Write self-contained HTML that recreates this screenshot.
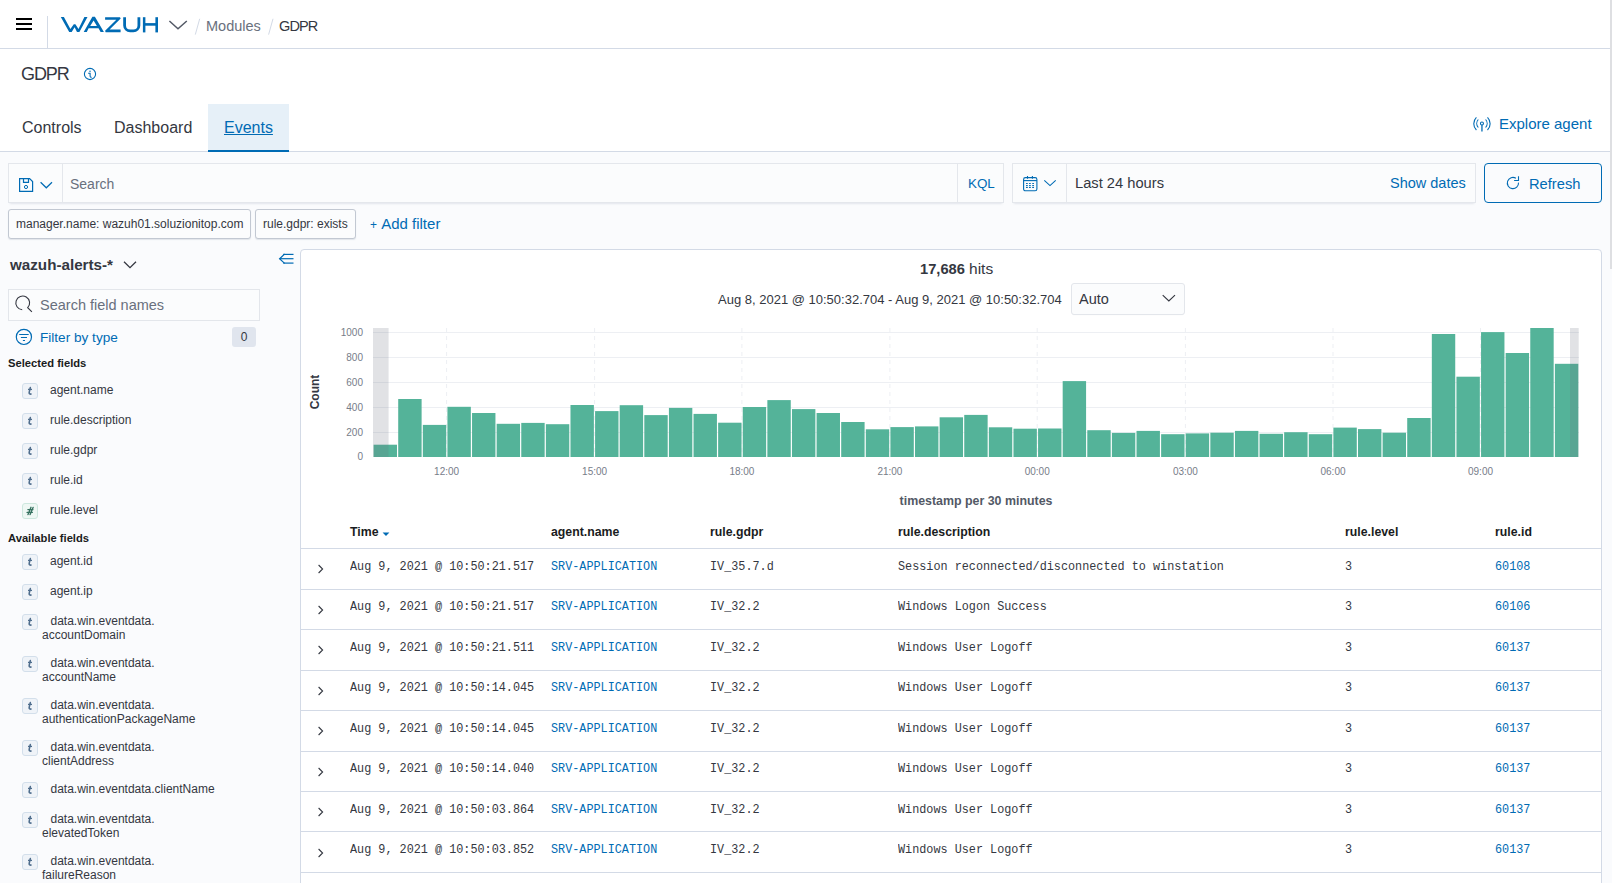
<!DOCTYPE html>
<html><head><meta charset="utf-8">
<style>
*{box-sizing:border-box;margin:0;padding:0}
html,body{width:1612px;height:883px;overflow:hidden}
body{font-family:"Liberation Sans",sans-serif;color:#343741;background:#FAFBFD;position:relative}
.a{position:absolute;white-space:nowrap}
.hdr{position:absolute;left:0;top:0;width:1610px;height:49px;background:#fff;border-bottom:1px solid #D3DAE6}
.sub{position:absolute;left:0;top:49px;width:1610px;height:103px;background:#fff;border-bottom:1px solid #D3DAE6}
.scroll{position:absolute;left:1610px;top:0;width:2px;height:269px;background:#DEDFE2}
.box{position:absolute;background:#FBFCFD;border:1px solid #E4E7EC;box-shadow:0 1px 1px -1px rgba(152,162,179,.2),0 3px 2px -2px rgba(152,162,179,.2)}
.pill{position:absolute;background:#FBFCFD;border:1px solid #C2C8D2;border-radius:3px;font-size:12px;line-height:28px;padding-left:7px;box-shadow:0 1px 1px rgba(152,162,179,.25)}
.blue{color:#006BB4}
.fi{width:16px;height:16px;border:1px solid #D3DFEB;background:#EFF3F8;border-radius:3px;text-align:center;font-family:"Liberation Serif",serif;font-style:italic;font-weight:700;font-size:12px;line-height:14px;color:#52708F}
.fg{border-color:#CDE7DE;background:#EEF7F4;color:#367260;font-family:"Liberation Sans",sans-serif;font-size:10px}
.th{font-size:12.3px;line-height:14px;font-weight:700;color:#1A1C21}
.td{font-family:"Liberation Mono",monospace;font-size:13.2px;line-height:14px;color:#343741;transform:scaleX(0.895);transform-origin:0 0}
.td.blue{color:#006BB4}
.fl{font-size:12px;line-height:14px;color:#343741}
</style></head><body>
<!-- header -->
<div class="hdr"></div>
<svg class="a" style="left:0;top:0" width="320" height="49" viewBox="0 0 320 49">
 <rect x="16" y="18" width="16" height="2" fill="#000"/>
 <rect x="16" y="23" width="16" height="2" fill="#000"/>
 <rect x="16" y="28" width="16" height="2" fill="#000"/>
 <rect x="47" y="16" width="1" height="33" fill="#D3DAE6"/>
 <g fill="#006BB4">
  <polygon points="60.8,16.9 63.9,16.9 70.4,28.9 73.8,24.2 75.4,24.2 78.5,28.9 84.4,16.9 87.5,16.9 79.4,32.1 77,32.1 74.6,27.3 71.7,32.1 69.2,32.1"/>
  <path fill-rule="evenodd" d="M83.7,32.1 L92.4,16.8 L94.9,16.8 L103.9,32.1 L100.6,32.1 L98.5,28.3 L88.6,28.3 L86.8,32.1 Z M90.2,25.9 L93.6,20.6 L96.9,25.9 Z"/>
  <polygon points="105.1,17.2 120,17.2 120.7,18.6 109.6,29.6 120.6,29.6 120.6,32.2 105.6,32.2 105.1,30.7 116.3,19.7 105.1,19.7"/>
 </g>
 <path d="M124.6 17.2 V25.4 A5.5 5.5 0 0 0 130.1 30.9 H133.4 A5.5 5.5 0 0 0 138.9 25.4 V17.2" fill="none" stroke="#006BB4" stroke-width="2.8"/>
 <g fill="#006BB4">
  <rect x="142.9" y="17.2" width="2.5" height="15.2"/>
  <rect x="155.4" y="17.2" width="2.6" height="15.2"/>
  <rect x="144" y="23.1" width="12" height="2.6"/>
 </g>
 <path d="M169.4 21 L178 28.7 L186.8 21" fill="none" stroke="#535966" stroke-width="1.5"/>
 <path d="M199.7 18.8 L195.3 34.6" stroke="#D3DAE6" stroke-width="1"/>
 <path d="M273 18.8 L268.6 34.6" stroke="#D3DAE6" stroke-width="1"/>
</svg>
<div class="a" style="left:206px;top:17px;font-size:14.5px;line-height:18px;color:#69707D">Modules</div>
<div class="a" style="left:279px;top:17px;font-size:14.5px;letter-spacing:-0.9px;line-height:18px;color:#343741">GDPR</div>
<div class="sub"></div>
<!-- query bar -->
<div class="box" style="left:8px;top:163px;width:996px;height:40px"></div>
<div class="a" style="left:62px;top:164px;width:1px;height:38px;background:#E4E7EC"></div>
<div class="a" style="left:957px;top:164px;width:1px;height:38px;background:#E4E7EC"></div>
<svg class="a" style="left:17px;top:176px" width="38" height="18" viewBox="0 0 38 18">
 <g fill="none" stroke="#006BB4" stroke-width="1.2">
  <path d="M2.6 2.6 H12.6 L15.6 5.6 V15.3 H2.6 Z"/>
  <path d="M6.5 2.6 V6.3 H11.5 V2.6"/>
  <circle cx="9" cy="11" r="1.6" stroke-width="1"/>
  <path d="M23.6 6.3 L29.3 11.8 L35 6.3"/>
 </g>
</svg>
<div class="a" style="left:70px;top:176px;font-size:14px;line-height:17px;color:#69707D">Search</div>
<div class="a" style="left:968px;top:174.5px;font-size:13.4px;line-height:17px;color:#006BB4">KQL</div>
<div class="box" style="left:1012px;top:163px;width:464px;height:40px"></div>
<div class="a" style="left:1066px;top:164px;width:1px;height:38px;background:#E4E7EC"></div>
<svg class="a" style="left:1020px;top:175px" width="40" height="18" viewBox="0 0 40 18">
 <g fill="none" stroke="#006BB4" stroke-width="1.1">
  <rect x="3.6" y="2.6" width="13.3" height="13.2" rx="1.8"/>
  <path d="M3.6 5.6 H16.9"/>
  <path d="M7.5 1 V3.8 M12.4 1 V3.8"/>
  <path d="M24.3 5.3 L30 10.6 L35.7 5.3"/>
 </g>
 <g fill="#006BB4"><rect x="5.95" y="7.95" width="1.9" height="1.1" rx="0.5"/><rect x="8.95" y="7.95" width="1.9" height="1.1" rx="0.5"/><rect x="12.15" y="7.95" width="1.9" height="1.1" rx="0.5"/><rect x="5.95" y="9.95" width="1.9" height="1.1" rx="0.5"/><rect x="8.95" y="9.95" width="1.9" height="1.1" rx="0.5"/><rect x="12.15" y="9.95" width="1.9" height="1.1" rx="0.5"/><rect x="5.95" y="11.85" width="1.9" height="1.1" rx="0.5"/><rect x="8.95" y="11.85" width="1.9" height="1.1" rx="0.5"/><rect x="12.15" y="11.85" width="1.9" height="1.1" rx="0.5"/></g>
</svg>
<div class="a" style="left:1075px;top:175px;font-size:14.7px;line-height:17px;color:#343741">Last 24 hours</div>
<div class="a" style="left:1390px;top:175px;font-size:14.5px;line-height:17px;color:#006BB4">Show dates</div>
<div class="a" style="left:1484px;top:163px;width:118px;height:40px;border:1px solid #006BB4;border-radius:4px;background:#FAFBFD"></div>
<svg class="a" style="left:1505px;top:175px" width="16" height="16" viewBox="0 0 16 16"><g fill="none" stroke="#006BB4" stroke-width="1.1"><path d="M10.9 3.3 A5.6 5.6 0 1 0 13.5 7.6"/><path d="M13.5 1.2 V5.5 H9.1"/></g></svg>
<div class="a" style="left:1529px;top:176px;font-size:14.7px;line-height:17px;color:#006BB4">Refresh</div>
<!-- filters -->
<div class="pill" style="left:8px;top:209px;width:243px;height:30px">manager.name: wazuh01.soluzionitop.com</div>
<div class="pill" style="left:255px;top:209px;width:101px;height:30px">rule.gdpr: exists</div>
<div class="a" style="left:370px;top:215px;font-size:15px;line-height:17px;color:#006BB4"><span style="font-size:12px;position:relative;top:-0.5px">+</span>&nbsp;Add filter</div>
<div class="a" style="left:21px;top:64px;font-size:18px;line-height:20px;letter-spacing:-1.1px;color:#343741">GDPR</div>
<svg class="a" style="left:83px;top:67px" width="14" height="14" viewBox="0 0 14 14"><circle cx="7" cy="7" r="5.6" fill="none" stroke="#006BB4" stroke-width="1.1"/><circle cx="7" cy="4.3" r="0.75" fill="#006BB4"/><path d="M5.1 6.3 H7.1 V9.2 Q7.2 10.4 8.6 10.4" fill="none" stroke="#006BB4" stroke-width="1.1"/></svg>
<div class="a" style="left:208px;top:104px;width:81px;height:48px;background:#E6F0F8;border-bottom:2px solid #006BB4"></div>
<div class="a" style="left:22px;top:118px;font-size:16px;line-height:20px;color:#343741">Controls</div>
<div class="a" style="left:114px;top:118px;font-size:16px;line-height:20px;color:#343741">Dashboard</div>
<div class="a" style="left:224px;top:118px;font-size:16px;line-height:20px;color:#006BB4;text-decoration:underline">Events</div>
<svg class="a" style="left:1472px;top:115px" width="20" height="18" viewBox="0 0 20 18">
 <g fill="none" stroke="#006BB4" stroke-width="1.1">
  <circle cx="9.95" cy="8.5" r="1.5"/>
  <path d="M9.95 10 V16.6" stroke-width="1.3"/>
  <path d="M6.3 4.5 A6 6 0 0 0 6.3 12.5"/>
  <path d="M13.6 4.5 A6 6 0 0 1 13.6 12.5"/>
  <path d="M4.4 2.3 A9 9 0 0 0 4.4 15"/>
  <path d="M15.5 2.3 A9 9 0 0 1 15.5 15"/>
 </g>
</svg>
<div class="a" style="left:1499px;top:115px;font-size:15px;line-height:18px;color:#006BB4">Explore agent</div>
<div class="scroll"></div>
<!-- sidebar -->
<div class="a" style="left:10px;top:256px;font-size:15.2px;line-height:18px;font-weight:700;color:#343741">wazuh-alerts-*</div>
<svg class="a" style="left:120px;top:256px" width="20" height="16" viewBox="0 0 20 16"><path d="M4 5.7 L10 11.6 L16 5.7" fill="none" stroke="#343741" stroke-width="1.3"/></svg>
<svg class="a" style="left:276px;top:250px" width="20" height="16" viewBox="0 0 20 16"><g fill="none" stroke="#006BB4" stroke-width="1.2"><path d="M8.6 4 L3.6 8.7 L8.6 13.4"/><path d="M3.6 8.7 H17.5"/><path d="M7.2 4.4 H17.5"/><path d="M7.2 13.1 H17.5"/></g></svg>
<div class="a" style="left:8px;top:289px;width:252px;height:32px;background:#FBFCFD;border:1px solid #E3E6EB"></div>
<svg class="a" style="left:14px;top:294px" width="20" height="20" viewBox="0 0 20 20"><path d="M17.9 17.9 L13.7 13.7 A6.9 6.9 0 1 0 8.2 15.8" fill="none" stroke="#343741" stroke-width="1.1"/></svg>
<div class="a" style="left:40px;top:297px;font-size:14.5px;line-height:17px;color:#69707D">Search field names</div>
<svg class="a" style="left:14px;top:327px" width="20" height="20" viewBox="0 0 20 20"><g fill="none" stroke="#006BB4" stroke-width="1.2"><circle cx="9.9" cy="9.9" r="7.6"/><path d="M5.2 7.5 H14.7 M6.9 10.5 H13 M8.9 13.5 H11" stroke-width="1"/></g></svg>
<div class="a" style="left:40px;top:329px;font-size:13.6px;line-height:17px;color:#006BB4">Filter by type</div>
<div class="a" style="left:232px;top:327px;width:24px;height:20px;background:#E0E5EE;border-radius:3px;font-size:12px;line-height:20px;text-align:center;color:#343741">0</div>
<div class="a" style="left:8px;top:357px;font-size:11.2px;line-height:13px;font-weight:700;color:#1A1C21">Selected fields</div>
<div class="a" style="left:8px;top:532px;font-size:11.2px;line-height:13px;font-weight:700;color:#1A1C21">Available fields</div>
<div class="a fi" style="left:22px;top:383px"><svg width="16" height="16" viewBox="0 0 16 16" style="position:absolute;left:-1px;top:-1px"><path d="M8.3 4.6 L7.2 9.4 Q6.9 11.1 9 11.1" fill="none" stroke="#4E6D8D" stroke-width="1.6" stroke-linecap="round"/><path d="M6 6.4 H10" stroke="#4E6D8D" stroke-width="1.3"/></svg></div>
<div class="a fl" style="left:50px;top:383px">agent.name</div>
<div class="a fi" style="left:22px;top:413px"><svg width="16" height="16" viewBox="0 0 16 16" style="position:absolute;left:-1px;top:-1px"><path d="M8.3 4.6 L7.2 9.4 Q6.9 11.1 9 11.1" fill="none" stroke="#4E6D8D" stroke-width="1.6" stroke-linecap="round"/><path d="M6 6.4 H10" stroke="#4E6D8D" stroke-width="1.3"/></svg></div>
<div class="a fl" style="left:50px;top:413px">rule.description</div>
<div class="a fi" style="left:22px;top:443px"><svg width="16" height="16" viewBox="0 0 16 16" style="position:absolute;left:-1px;top:-1px"><path d="M8.3 4.6 L7.2 9.4 Q6.9 11.1 9 11.1" fill="none" stroke="#4E6D8D" stroke-width="1.6" stroke-linecap="round"/><path d="M6 6.4 H10" stroke="#4E6D8D" stroke-width="1.3"/></svg></div>
<div class="a fl" style="left:50px;top:443px">rule.gdpr</div>
<div class="a fi" style="left:22px;top:473px"><svg width="16" height="16" viewBox="0 0 16 16" style="position:absolute;left:-1px;top:-1px"><path d="M8.3 4.6 L7.2 9.4 Q6.9 11.1 9 11.1" fill="none" stroke="#4E6D8D" stroke-width="1.6" stroke-linecap="round"/><path d="M6 6.4 H10" stroke="#4E6D8D" stroke-width="1.3"/></svg></div>
<div class="a fl" style="left:50px;top:473px">rule.id</div>
<div class="a fi fg" style="left:22px;top:503px"><svg width="16" height="16" viewBox="0 0 16 16" style="position:absolute;left:-1px;top:-1px"><g fill="none" stroke="#357160" stroke-width="1.35" stroke-linecap="round"><path d="M9 4.3 L6 11.6 M11.1 4.4 L8.1 11.6 M5.9 6.6 H11 M5.1 9.4 H10.3"/></g></svg></div>
<div class="a fl" style="left:50px;top:503px">rule.level</div>
<div class="a fi" style="left:22px;top:554px"><svg width="16" height="16" viewBox="0 0 16 16" style="position:absolute;left:-1px;top:-1px"><path d="M8.3 4.6 L7.2 9.4 Q6.9 11.1 9 11.1" fill="none" stroke="#4E6D8D" stroke-width="1.6" stroke-linecap="round"/><path d="M6 6.4 H10" stroke="#4E6D8D" stroke-width="1.3"/></svg></div>
<div class="a fl" style="left:50px;top:554px">agent.id</div>
<div class="a fi" style="left:22px;top:584px"><svg width="16" height="16" viewBox="0 0 16 16" style="position:absolute;left:-1px;top:-1px"><path d="M8.3 4.6 L7.2 9.4 Q6.9 11.1 9 11.1" fill="none" stroke="#4E6D8D" stroke-width="1.6" stroke-linecap="round"/><path d="M6 6.4 H10" stroke="#4E6D8D" stroke-width="1.3"/></svg></div>
<div class="a fl" style="left:50px;top:584px">agent.ip</div>
<div class="a fi" style="left:22px;top:614px"><svg width="16" height="16" viewBox="0 0 16 16" style="position:absolute;left:-1px;top:-1px"><path d="M8.3 4.6 L7.2 9.4 Q6.9 11.1 9 11.1" fill="none" stroke="#4E6D8D" stroke-width="1.6" stroke-linecap="round"/><path d="M6 6.4 H10" stroke="#4E6D8D" stroke-width="1.3"/></svg></div>
<div class="a fl" style="left:50.5px;top:614px">data.win.eventdata.</div>
<div class="a fl" style="left:42px;top:628px">accountDomain</div>
<div class="a fi" style="left:22px;top:656px"><svg width="16" height="16" viewBox="0 0 16 16" style="position:absolute;left:-1px;top:-1px"><path d="M8.3 4.6 L7.2 9.4 Q6.9 11.1 9 11.1" fill="none" stroke="#4E6D8D" stroke-width="1.6" stroke-linecap="round"/><path d="M6 6.4 H10" stroke="#4E6D8D" stroke-width="1.3"/></svg></div>
<div class="a fl" style="left:50.5px;top:656px">data.win.eventdata.</div>
<div class="a fl" style="left:42px;top:670px">accountName</div>
<div class="a fi" style="left:22px;top:698px"><svg width="16" height="16" viewBox="0 0 16 16" style="position:absolute;left:-1px;top:-1px"><path d="M8.3 4.6 L7.2 9.4 Q6.9 11.1 9 11.1" fill="none" stroke="#4E6D8D" stroke-width="1.6" stroke-linecap="round"/><path d="M6 6.4 H10" stroke="#4E6D8D" stroke-width="1.3"/></svg></div>
<div class="a fl" style="left:50.5px;top:698px">data.win.eventdata.</div>
<div class="a fl" style="left:42px;top:712px">authenticationPackageName</div>
<div class="a fi" style="left:22px;top:740px"><svg width="16" height="16" viewBox="0 0 16 16" style="position:absolute;left:-1px;top:-1px"><path d="M8.3 4.6 L7.2 9.4 Q6.9 11.1 9 11.1" fill="none" stroke="#4E6D8D" stroke-width="1.6" stroke-linecap="round"/><path d="M6 6.4 H10" stroke="#4E6D8D" stroke-width="1.3"/></svg></div>
<div class="a fl" style="left:50.5px;top:740px">data.win.eventdata.</div>
<div class="a fl" style="left:42px;top:754px">clientAddress</div>
<div class="a fi" style="left:22px;top:782px"><svg width="16" height="16" viewBox="0 0 16 16" style="position:absolute;left:-1px;top:-1px"><path d="M8.3 4.6 L7.2 9.4 Q6.9 11.1 9 11.1" fill="none" stroke="#4E6D8D" stroke-width="1.6" stroke-linecap="round"/><path d="M6 6.4 H10" stroke="#4E6D8D" stroke-width="1.3"/></svg></div>
<div class="a fl" style="left:50.5px;top:782px">data.win.eventdata.clientName</div>
<div class="a fi" style="left:22px;top:812px"><svg width="16" height="16" viewBox="0 0 16 16" style="position:absolute;left:-1px;top:-1px"><path d="M8.3 4.6 L7.2 9.4 Q6.9 11.1 9 11.1" fill="none" stroke="#4E6D8D" stroke-width="1.6" stroke-linecap="round"/><path d="M6 6.4 H10" stroke="#4E6D8D" stroke-width="1.3"/></svg></div>
<div class="a fl" style="left:50.5px;top:812px">data.win.eventdata.</div>
<div class="a fl" style="left:42px;top:826px">elevatedToken</div>
<div class="a fi" style="left:22px;top:854px"><svg width="16" height="16" viewBox="0 0 16 16" style="position:absolute;left:-1px;top:-1px"><path d="M8.3 4.6 L7.2 9.4 Q6.9 11.1 9 11.1" fill="none" stroke="#4E6D8D" stroke-width="1.6" stroke-linecap="round"/><path d="M6 6.4 H10" stroke="#4E6D8D" stroke-width="1.3"/></svg></div>
<div class="a fl" style="left:50.5px;top:854px">data.win.eventdata.</div>
<div class="a fl" style="left:42px;top:868px">failureReason</div>
<!-- panel -->
<div class="a" style="left:300px;top:249px;width:1302px;height:700px;background:#fff;border:1px solid #D3DAE6;border-radius:4px"></div>
<div class="a" style="left:920px;top:260px;font-size:14.7px;line-height:18px;color:#343741"><b>17,686</b> <span style="font-size:15.5px">hits</span></div>
<div class="a" style="left:718px;top:292px;font-size:13px;line-height:16px;color:#343741">Aug 8, 2021 @ 10:50:32.704 - Aug 9, 2021 @ 10:50:32.704</div>
<div class="a" style="left:1071px;top:283px;width:114px;height:32px;background:#FBFCFD;border:1px solid #E3E6EB;border-radius:3px;box-shadow:0 1px 1px -1px rgba(152,162,179,.2)"></div>
<div class="a" style="left:1079px;top:291px;font-size:14.5px;line-height:17px;color:#343741">Auto</div>
<svg class="a" style="left:1159px;top:290px" width="18" height="16" viewBox="0 0 18 16"><path d="M3.7 5.2 L9.85 10.9 L16 5.2" fill="none" stroke="#343741" stroke-width="1.15"/></svg>
<svg class="a" style="left:0;top:0" width="1612" height="883" viewBox="0 0 1612 883">
<line x1="373" y1="332.5" x2="1579" y2="332.5" stroke="#EDEFF3" stroke-width="1"/>
<line x1="373" y1="357.5" x2="1579" y2="357.5" stroke="#EDEFF3" stroke-width="1"/>
<line x1="373" y1="382.5" x2="1579" y2="382.5" stroke="#EDEFF3" stroke-width="1"/>
<line x1="373" y1="407.5" x2="1579" y2="407.5" stroke="#EDEFF3" stroke-width="1"/>
<line x1="373" y1="432.5" x2="1579" y2="432.5" stroke="#EDEFF3" stroke-width="1"/>
<line x1="446.6" y1="328" x2="446.6" y2="457" stroke="#EDEFF3" stroke-width="1" stroke-dasharray="4 4"/>
<line x1="594.6" y1="328" x2="594.6" y2="457" stroke="#EDEFF3" stroke-width="1" stroke-dasharray="4 4"/>
<line x1="741.9" y1="328" x2="741.9" y2="457" stroke="#EDEFF3" stroke-width="1" stroke-dasharray="4 4"/>
<line x1="889.9" y1="328" x2="889.9" y2="457" stroke="#EDEFF3" stroke-width="1" stroke-dasharray="4 4"/>
<line x1="1037.2" y1="328" x2="1037.2" y2="457" stroke="#EDEFF3" stroke-width="1" stroke-dasharray="4 4"/>
<line x1="1185.4" y1="328" x2="1185.4" y2="457" stroke="#EDEFF3" stroke-width="1" stroke-dasharray="4 4"/>
<line x1="1333" y1="328" x2="1333" y2="457" stroke="#EDEFF3" stroke-width="1" stroke-dasharray="4 4"/>
<line x1="1480.5" y1="328" x2="1480.5" y2="457" stroke="#EDEFF3" stroke-width="1" stroke-dasharray="4 4"/>
<rect x="373.60" y="444.7" width="23.4" height="12.3" fill="#54B399"/>
<rect x="398.21" y="399" width="23.4" height="58.0" fill="#54B399"/>
<rect x="422.82" y="424.9" width="23.4" height="32.1" fill="#54B399"/>
<rect x="447.43" y="406.8" width="23.4" height="50.2" fill="#54B399"/>
<rect x="472.04" y="413" width="23.4" height="44.0" fill="#54B399"/>
<rect x="496.65" y="423.8" width="23.4" height="33.2" fill="#54B399"/>
<rect x="521.26" y="422.9" width="23.4" height="34.1" fill="#54B399"/>
<rect x="545.87" y="424.2" width="23.4" height="32.8" fill="#54B399"/>
<rect x="570.48" y="405" width="23.4" height="52.0" fill="#54B399"/>
<rect x="595.09" y="411.1" width="23.4" height="45.9" fill="#54B399"/>
<rect x="619.70" y="405.2" width="23.4" height="51.8" fill="#54B399"/>
<rect x="644.31" y="415.1" width="23.4" height="41.9" fill="#54B399"/>
<rect x="668.92" y="407.9" width="23.4" height="49.1" fill="#54B399"/>
<rect x="693.53" y="413.9" width="23.4" height="43.1" fill="#54B399"/>
<rect x="718.14" y="422.7" width="23.4" height="34.3" fill="#54B399"/>
<rect x="742.75" y="407" width="23.4" height="50.0" fill="#54B399"/>
<rect x="767.36" y="400.1" width="23.4" height="56.9" fill="#54B399"/>
<rect x="791.97" y="409.1" width="23.4" height="47.9" fill="#54B399"/>
<rect x="816.58" y="413" width="23.4" height="44.0" fill="#54B399"/>
<rect x="841.19" y="422" width="23.4" height="35.0" fill="#54B399"/>
<rect x="865.80" y="429.3" width="23.4" height="27.7" fill="#54B399"/>
<rect x="890.41" y="427.1" width="23.4" height="29.9" fill="#54B399"/>
<rect x="915.02" y="426.4" width="23.4" height="30.6" fill="#54B399"/>
<rect x="939.63" y="417.3" width="23.4" height="39.7" fill="#54B399"/>
<rect x="964.24" y="414.9" width="23.4" height="42.1" fill="#54B399"/>
<rect x="988.85" y="427.3" width="23.4" height="29.7" fill="#54B399"/>
<rect x="1013.46" y="428.7" width="23.4" height="28.3" fill="#54B399"/>
<rect x="1038.07" y="428.5" width="23.4" height="28.5" fill="#54B399"/>
<rect x="1062.68" y="381.1" width="23.4" height="75.9" fill="#54B399"/>
<rect x="1087.29" y="430.2" width="23.4" height="26.8" fill="#54B399"/>
<rect x="1111.90" y="432.9" width="23.4" height="24.1" fill="#54B399"/>
<rect x="1136.51" y="430.9" width="23.4" height="26.1" fill="#54B399"/>
<rect x="1161.12" y="434.2" width="23.4" height="22.8" fill="#54B399"/>
<rect x="1185.73" y="433.4" width="23.4" height="23.6" fill="#54B399"/>
<rect x="1210.34" y="432.7" width="23.4" height="24.3" fill="#54B399"/>
<rect x="1234.95" y="430.9" width="23.4" height="26.1" fill="#54B399"/>
<rect x="1259.56" y="433.8" width="23.4" height="23.2" fill="#54B399"/>
<rect x="1284.17" y="432.2" width="23.4" height="24.8" fill="#54B399"/>
<rect x="1308.78" y="434.2" width="23.4" height="22.8" fill="#54B399"/>
<rect x="1333.39" y="427.6" width="23.4" height="29.4" fill="#54B399"/>
<rect x="1358.00" y="429.1" width="23.4" height="27.9" fill="#54B399"/>
<rect x="1382.61" y="432.7" width="23.4" height="24.3" fill="#54B399"/>
<rect x="1407.22" y="418" width="23.4" height="39.0" fill="#54B399"/>
<rect x="1431.83" y="334" width="23.4" height="123.0" fill="#54B399"/>
<rect x="1456.44" y="376.7" width="23.4" height="80.3" fill="#54B399"/>
<rect x="1481.05" y="332.1" width="23.4" height="124.9" fill="#54B399"/>
<rect x="1505.66" y="353" width="23.4" height="104.0" fill="#54B399"/>
<rect x="1530.27" y="328" width="23.4" height="129.0" fill="#54B399"/>
<rect x="1554.88" y="363.8" width="23.4" height="93.2" fill="#54B399"/>
<rect x="373" y="328" width="15.6" height="129" fill="rgba(105,112,125,0.2)"/>
<rect x="1570" y="328" width="8.7" height="129" fill="rgba(105,112,125,0.2)"/>
<text x="363" y="335.5" text-anchor="end" font-family="Liberation Sans" font-size="10" fill="#777D89">1000</text>
<text x="363" y="360.5" text-anchor="end" font-family="Liberation Sans" font-size="10" fill="#777D89">800</text>
<text x="363" y="385.5" text-anchor="end" font-family="Liberation Sans" font-size="10" fill="#777D89">600</text>
<text x="363" y="410.5" text-anchor="end" font-family="Liberation Sans" font-size="10" fill="#777D89">400</text>
<text x="363" y="435.5" text-anchor="end" font-family="Liberation Sans" font-size="10" fill="#777D89">200</text>
<text x="363" y="460.0" text-anchor="end" font-family="Liberation Sans" font-size="10" fill="#777D89">0</text>
<text x="446.6" y="475" text-anchor="middle" font-family="Liberation Sans" font-size="10" fill="#777D89">12:00</text>
<text x="594.6" y="475" text-anchor="middle" font-family="Liberation Sans" font-size="10" fill="#777D89">15:00</text>
<text x="741.9" y="475" text-anchor="middle" font-family="Liberation Sans" font-size="10" fill="#777D89">18:00</text>
<text x="889.9" y="475" text-anchor="middle" font-family="Liberation Sans" font-size="10" fill="#777D89">21:00</text>
<text x="1037.2" y="475" text-anchor="middle" font-family="Liberation Sans" font-size="10" fill="#777D89">00:00</text>
<text x="1185.4" y="475" text-anchor="middle" font-family="Liberation Sans" font-size="10" fill="#777D89">03:00</text>
<text x="1333" y="475" text-anchor="middle" font-family="Liberation Sans" font-size="10" fill="#777D89">06:00</text>
<text x="1480.5" y="475" text-anchor="middle" font-family="Liberation Sans" font-size="10" fill="#777D89">09:00</text>
<text transform="translate(319,392) rotate(-90)" text-anchor="middle" font-family="Liberation Sans" font-size="12" font-weight="700" fill="#343741">Count</text>
<text x="976" y="505" text-anchor="middle" font-family="Liberation Sans" font-size="12.4" font-weight="700" fill="#535966">timestamp per 30 minutes</text>
</svg>
<!-- table -->
<div class="a th" style="left:350px;top:525px">Time</div>
<svg class="a" style="left:381px;top:531px" width="10" height="7" viewBox="0 0 10 7"><path d="M1.6 1.4 H8.4 L5 5 Z" fill="#006BB4"/></svg>
<div class="a th" style="left:551px;top:525px">agent.name</div>
<div class="a th" style="left:710px;top:525px">rule.gdpr</div>
<div class="a th" style="left:898px;top:525px">rule.description</div>
<div class="a th" style="left:1345px;top:525px">rule.level</div>
<div class="a th" style="left:1495px;top:525px">rule.id</div>
<div class="a" style="left:301px;top:548px;width:1300px;height:1px;background:#D3DAE6"></div>
<div class="a" style="left:301px;top:589px;width:1300px;height:1px;background:#D3DAE6"></div>
<div class="a" style="left:301px;top:629px;width:1300px;height:1px;background:#D3DAE6"></div>
<div class="a" style="left:301px;top:670px;width:1300px;height:1px;background:#D3DAE6"></div>
<div class="a" style="left:301px;top:710px;width:1300px;height:1px;background:#D3DAE6"></div>
<div class="a" style="left:301px;top:751px;width:1300px;height:1px;background:#D3DAE6"></div>
<div class="a" style="left:301px;top:791px;width:1300px;height:1px;background:#D3DAE6"></div>
<div class="a" style="left:301px;top:831px;width:1300px;height:1px;background:#D3DAE6"></div>
<div class="a" style="left:301px;top:872px;width:1300px;height:1px;background:#D3DAE6"></div>
<svg class="a" style="left:314px;top:562.0px" width="12" height="12" viewBox="0 0 12 12"><path d="M4.6 3 L8.6 7 L4.6 11" fill="none" stroke="#343741" stroke-width="1.1"/></svg>
<div class="a td" style="left:350px;top:559.5px">Aug 9, 2021 @ 10:50:21.517</div>
<div class="a td blue" style="left:551px;top:559.5px">SRV-APPLICATION</div>
<div class="a td" style="left:710px;top:559.5px">IV_35.7.d</div>
<div class="a td" style="left:898px;top:559.5px">Session reconnected/disconnected to winstation</div>
<div class="a td" style="left:1345px;top:559.5px">3</div>
<div class="a td blue" style="left:1495px;top:559.5px">60108</div>
<svg class="a" style="left:314px;top:602.5px" width="12" height="12" viewBox="0 0 12 12"><path d="M4.6 3 L8.6 7 L4.6 11" fill="none" stroke="#343741" stroke-width="1.1"/></svg>
<div class="a td" style="left:350px;top:600.0px">Aug 9, 2021 @ 10:50:21.517</div>
<div class="a td blue" style="left:551px;top:600.0px">SRV-APPLICATION</div>
<div class="a td" style="left:710px;top:600.0px">IV_32.2</div>
<div class="a td" style="left:898px;top:600.0px">Windows Logon Success</div>
<div class="a td" style="left:1345px;top:600.0px">3</div>
<div class="a td blue" style="left:1495px;top:600.0px">60106</div>
<svg class="a" style="left:314px;top:643.0px" width="12" height="12" viewBox="0 0 12 12"><path d="M4.6 3 L8.6 7 L4.6 11" fill="none" stroke="#343741" stroke-width="1.1"/></svg>
<div class="a td" style="left:350px;top:640.5px">Aug 9, 2021 @ 10:50:21.511</div>
<div class="a td blue" style="left:551px;top:640.5px">SRV-APPLICATION</div>
<div class="a td" style="left:710px;top:640.5px">IV_32.2</div>
<div class="a td" style="left:898px;top:640.5px">Windows User Logoff</div>
<div class="a td" style="left:1345px;top:640.5px">3</div>
<div class="a td blue" style="left:1495px;top:640.5px">60137</div>
<svg class="a" style="left:314px;top:683.5px" width="12" height="12" viewBox="0 0 12 12"><path d="M4.6 3 L8.6 7 L4.6 11" fill="none" stroke="#343741" stroke-width="1.1"/></svg>
<div class="a td" style="left:350px;top:681.0px">Aug 9, 2021 @ 10:50:14.045</div>
<div class="a td blue" style="left:551px;top:681.0px">SRV-APPLICATION</div>
<div class="a td" style="left:710px;top:681.0px">IV_32.2</div>
<div class="a td" style="left:898px;top:681.0px">Windows User Logoff</div>
<div class="a td" style="left:1345px;top:681.0px">3</div>
<div class="a td blue" style="left:1495px;top:681.0px">60137</div>
<svg class="a" style="left:314px;top:724.0px" width="12" height="12" viewBox="0 0 12 12"><path d="M4.6 3 L8.6 7 L4.6 11" fill="none" stroke="#343741" stroke-width="1.1"/></svg>
<div class="a td" style="left:350px;top:721.5px">Aug 9, 2021 @ 10:50:14.045</div>
<div class="a td blue" style="left:551px;top:721.5px">SRV-APPLICATION</div>
<div class="a td" style="left:710px;top:721.5px">IV_32.2</div>
<div class="a td" style="left:898px;top:721.5px">Windows User Logoff</div>
<div class="a td" style="left:1345px;top:721.5px">3</div>
<div class="a td blue" style="left:1495px;top:721.5px">60137</div>
<svg class="a" style="left:314px;top:764.5px" width="12" height="12" viewBox="0 0 12 12"><path d="M4.6 3 L8.6 7 L4.6 11" fill="none" stroke="#343741" stroke-width="1.1"/></svg>
<div class="a td" style="left:350px;top:762.0px">Aug 9, 2021 @ 10:50:14.040</div>
<div class="a td blue" style="left:551px;top:762.0px">SRV-APPLICATION</div>
<div class="a td" style="left:710px;top:762.0px">IV_32.2</div>
<div class="a td" style="left:898px;top:762.0px">Windows User Logoff</div>
<div class="a td" style="left:1345px;top:762.0px">3</div>
<div class="a td blue" style="left:1495px;top:762.0px">60137</div>
<svg class="a" style="left:314px;top:805.0px" width="12" height="12" viewBox="0 0 12 12"><path d="M4.6 3 L8.6 7 L4.6 11" fill="none" stroke="#343741" stroke-width="1.1"/></svg>
<div class="a td" style="left:350px;top:802.5px">Aug 9, 2021 @ 10:50:03.864</div>
<div class="a td blue" style="left:551px;top:802.5px">SRV-APPLICATION</div>
<div class="a td" style="left:710px;top:802.5px">IV_32.2</div>
<div class="a td" style="left:898px;top:802.5px">Windows User Logoff</div>
<div class="a td" style="left:1345px;top:802.5px">3</div>
<div class="a td blue" style="left:1495px;top:802.5px">60137</div>
<svg class="a" style="left:314px;top:845.5px" width="12" height="12" viewBox="0 0 12 12"><path d="M4.6 3 L8.6 7 L4.6 11" fill="none" stroke="#343741" stroke-width="1.1"/></svg>
<div class="a td" style="left:350px;top:843.0px">Aug 9, 2021 @ 10:50:03.852</div>
<div class="a td blue" style="left:551px;top:843.0px">SRV-APPLICATION</div>
<div class="a td" style="left:710px;top:843.0px">IV_32.2</div>
<div class="a td" style="left:898px;top:843.0px">Windows User Logoff</div>
<div class="a td" style="left:1345px;top:843.0px">3</div>
<div class="a td blue" style="left:1495px;top:843.0px">60137</div>
</body></html>
